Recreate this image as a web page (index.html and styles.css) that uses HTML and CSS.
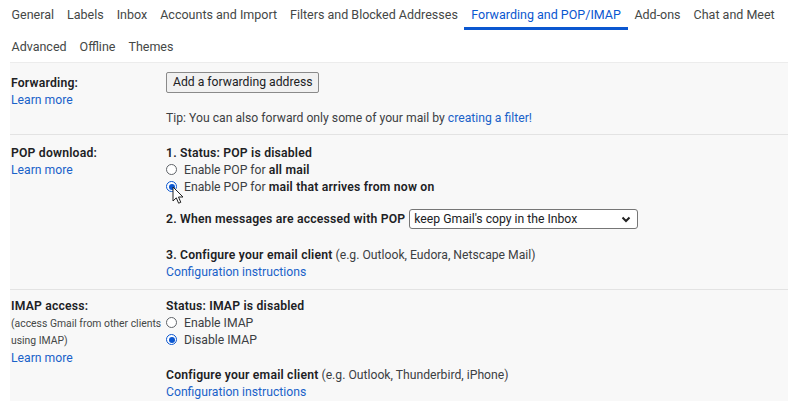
FILE: index.html
```html
<!DOCTYPE html>
<html>
<head>
<meta charset="utf-8">
<link rel="stylesheet" href="styles.css">
</head>
<body>
<nav class="tabs">
  <div class="tab-row">
    <span class="tab">General</span>
    <span class="tab">Labels</span>
    <span class="tab">Inbox</span>
    <span class="tab">Accounts and Import</span>
    <span class="tab">Filters and Blocked Addresses</span>
    <span class="tab active">Forwarding and POP/IMAP</span>
    <span class="tab">Add-ons</span>
    <span class="tab">Chat and Meet</span>
  </div>
  <div class="tab-row row2">
    <span class="tab">Advanced</span>
    <span class="tab">Offline</span>
    <span class="tab">Themes</span>
  </div>
</nav>
<main class="panel">
  <section class="setting fwd">
    <div class="label">
      <div class="title">Forwarding:</div>
      <a class="link">Learn more</a>
    </div>
    <div class="value">
      <button class="btn">Add a forwarding address</button>
      <div class="tip">Tip: You can also forward only some of your mail by <a class="link">creating a filter!</a></div>
    </div>
  </section>
  <section class="setting pop">
    <div class="label">
      <div class="title">POP download:</div>
      <a class="link">Learn more</a>
    </div>
    <div class="value">
      <div class="line"><b>1. Status: POP is disabled</b></div>
      <div class="line"><span class="radio"></span>Enable POP for <b>all mail</b></div>
      <div class="line cursor-host"><span class="radio on"></span>Enable POP for <b>mail that arrives from now on</b>
        <svg class="cursor" width="13" height="19" viewBox="0 0 13 19"><path d="M1 1 L1 15 L4.3 11.8 L6.6 17.2 L8.8 16.3 L6.5 11 L11 11 Z" fill="#fff" stroke="#222" stroke-width="1" stroke-linejoin="round"/></svg>
      </div>
      <div class="line sel-row"><b>2. When messages are accessed with POP</b>
        <span class="select">keep Gmail's copy in the Inbox
          <svg class="chev" width="10" height="7" viewBox="0 0 10 7"><path d="M1.5 1.5 L5 5 L8.5 1.5" fill="none" stroke="#222" stroke-width="2"/></svg>
        </span>
      </div>
      <div class="line gap"><b>3. Configure your email client</b> (e.g. Outlook, Eudora, Netscape Mail)</div>
      <div class="line"><a class="link">Configuration instructions</a></div>
    </div>
  </section>
  <section class="setting imap">
    <div class="label">
      <div class="title">IMAP access:</div>
      <div class="note">(access Gmail from other clients</div>
      <div class="note">using IMAP)</div>
      <a class="link more">Learn more</a>
    </div>
    <div class="value">
      <div class="line"><b>Status: IMAP is disabled</b></div>
      <div class="line"><span class="radio"></span>Enable IMAP</div>
      <div class="line"><span class="radio on"></span>Disable IMAP</div>
      <div class="line gap"><b>Configure your email client</b> (e.g. Outlook, Thunderbird, iPhone)</div>
      <div class="line"><a class="link">Configuration instructions</a></div>
    </div>
  </section>
</main>
</body>
</html>
```
FILE: styles.css
```css
* { box-sizing: border-box; }
html, body { margin: 0; padding: 0; background: #fff; }
body {
  font-family: Roboto, "Liberation Sans", Arial, sans-serif;
  font-size: 12.2px;
  color: #202124;
  width: 798px;
  height: 401px;
  overflow: hidden;
}
.tabs { padding-left: 5px; font-size: 12.5px; }
.tab-row { display: flex; height: 30px; align-items: flex-start; }
.tab-row.row2 { height: 32px; }
.tab {
  color: #444746;
  padding: 6px 6.5px 0;
  height: 30px;
  line-height: 17px;
  white-space: nowrap;
}
.row2 .tab { padding-top: 8px; }
.tab.active {
  color: #0b57d0;
  border-bottom: 3px solid #0b57d0;
  padding-left: 7px;
  padding-right: 7px;
}
.panel {
  margin: 0 10px;
  background: #f8f8f8;
  border-top: 1px solid #ececec;
}
.setting {
  display: grid;
  grid-template-columns: 156px 1fr;
  line-height: 17px;
}
.setting + .setting { border-top: 1px solid #e3e3e3; }
.label { padding-left: 1px; display: flex; flex-direction: column; align-items: flex-start; }
.title { font-weight: 600; color: #202124; letter-spacing: 0.2px; }
.link { color: #1a62c9; text-decoration: none; }
.note { font-size: 10.4px; color: #444746; white-space: nowrap; }
.more { margin-top: 1px; }
b { font-weight: 600; letter-spacing: 0.2px; }
.fwd { padding: 10px 0 7px; }
.fwd .label { padding-top: 2px; }
.pop { padding: 10px 0 8px; }
.imap { padding: 8px 0 0; }
.btn {
  display: block;
  margin-top: -1px;
  font: inherit;
  color: #202124;
  background: #f1f1f1;
  border: 1px solid #8a8a8a;
  border-radius: 2px;
  height: 21px;
  padding: 0 6px;
  line-height: 19px;
}
.tip { margin-top: 17px; color: #3c4043; }
.line { color: #3c4043; white-space: nowrap; }
.line b { color: #202124; }
.radio {
  display: inline-block;
  vertical-align: -1px;
  width: 11px; height: 11px;
  border: 1px solid #5f6368;
  border-radius: 50%;
  margin: 0 7px 0 0;
  background: #fff;
  position: relative;
}
.radio.on { border-color: #0b57d0; }
.radio.on::after {
  content: "";
  position: absolute;
  left: 1.5px; top: 1.5px;
  width: 6px; height: 6px;
  border-radius: 50%;
  background: #0b57d0;
}
.cursor-host { position: relative; }
.cursor { position: absolute; left: 6px; top: 7px; }
.sel-row { margin-top: 13px; display: flex; align-items: center; height: 20px; }
.select {
  display: inline-flex;
  align-items: center;
  justify-content: space-between;
  margin-left: 4px;
  width: 229px;
  height: 20px;
  border: 1px solid #767676;
  border-radius: 3px;
  background: #fff;
  padding: 0 6px 0 4px;
  color: #202124;
}
.gap { margin-top: 18px; }
```
